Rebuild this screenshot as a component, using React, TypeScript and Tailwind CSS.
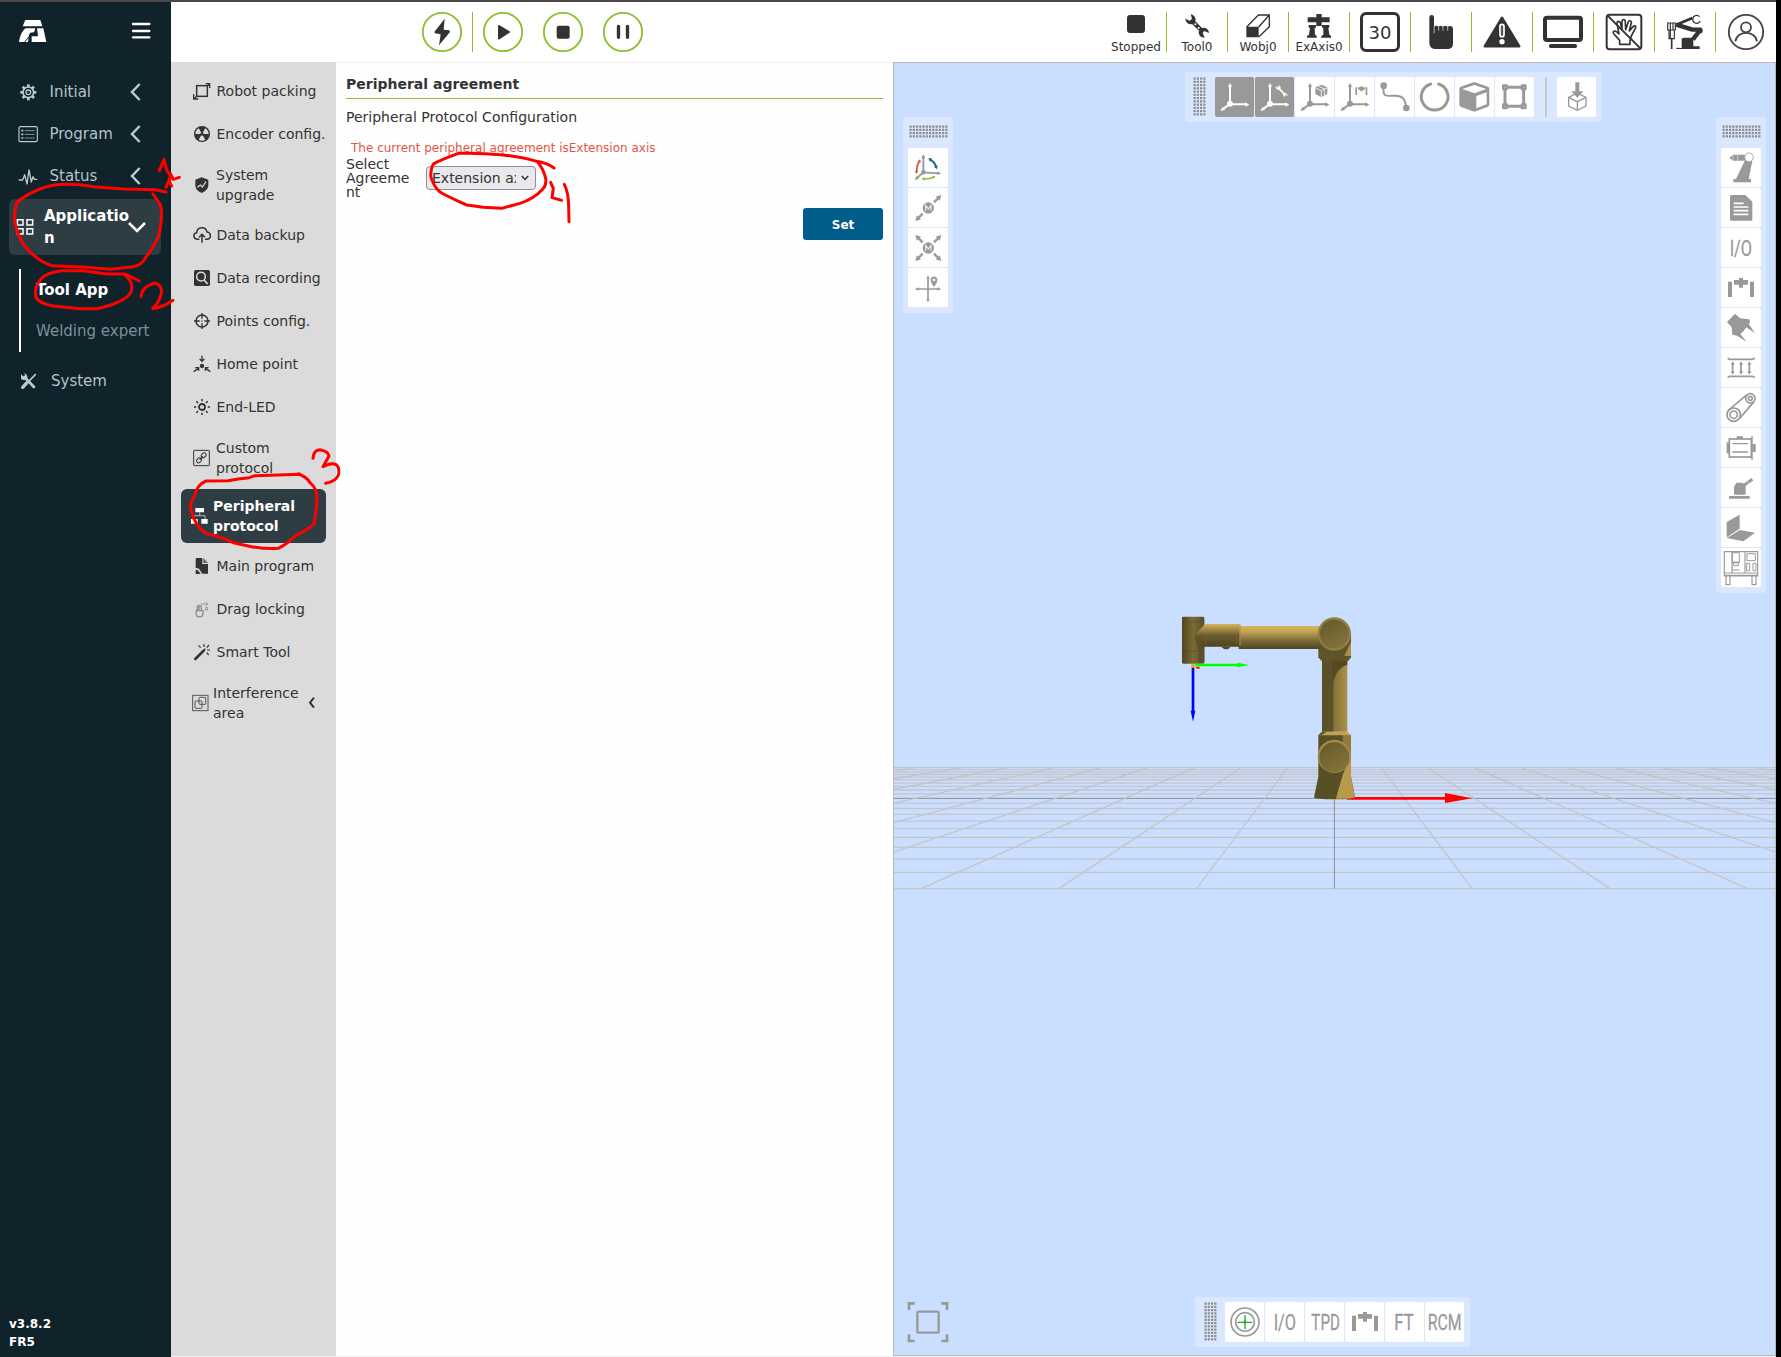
import React from "react";

type Kids = { children?: React.ReactNode };

/* Square icon drawn on a three-units-per-pixel grid. */
function Ico({ s = 40, children, className = "" }: Kids & { s?: number; className?: string }) {
  return (
    <svg width={s} height={s} viewBox={`0 0 ${s * 3} ${s * 3}`} className={`shrink-0 overflow-visible ${className}`} fill="none" stroke="none">
      {children}
    </svg>
  );
}

const DK = "#333333";
const GR = "#999999";

/* ---------- left navigation ---------- */

function NavChevron() {
  return (
    <Ico s={18} className="absolute left-[127px] top-[12px]">
      <path d="M38 3 L15 27 L38 51" stroke="#b9cad0" strokeWidth="7.5" />
    </Ico>
  );
}

function NavRow({ icon, label, chevron = true }: { icon: React.ReactNode; label: string; chevron?: boolean }) {
  return (
    <div className="relative flex h-[42px] items-center pl-[18px] text-[15px] text-[#b3c3c9]">
      <span className="flex w-[31.5px] items-center">{icon}</span>
      <span>{label}</span>
      {chevron && <NavChevron />}
    </div>
  );
}

const LT = "#b9cad0";
const gearTeeth = [0, 45, 90, 135, 180, 225, 270, 315];

function Sidebar() {
  return (
    <aside className="flex w-[171px] shrink-0 flex-col bg-[#10222a]">
      <div className="flex h-[69px] items-start pl-[18px] pt-[17px]">
        <svg width="30" height="24" viewBox="0 0 90 72" fill="#ffffff">
          <path d="M22 3 H67 L73 22 H14 Z" />
          <path d="M23 28 H52 L48 41 H36 L33 49 L30 69 H3 C6 52 11 36 23 28 Z" />
          <path d="M57 28 H76 L85 69 H41 V52 H60 Z" />
          <path d="M56 25 L53 42 H41 L34 52 L20 69" fill="none" stroke="#10222a" strokeWidth="3" />
        </svg>
        <svg width="20" height="18" viewBox="0 0 60 54" className="ml-[83px] mt-[3px]">
          <path d="M6 6 H55 M6 27 H55 M6 46 H55" stroke="#fff" strokeWidth="7" strokeLinecap="round" />
        </svg>
      </div>
      <NavRow
        label="Initial"
        icon={
          <Ico s={20}>
            <circle cx="31" cy="31" r="16" stroke={LT} strokeWidth="5" />
            <circle cx="31" cy="31" r="7" stroke={LT} strokeWidth="4" />
            {gearTeeth.map((a) => (
              <rect key={a} x="27" y="7" width="8" height="8" fill={LT} transform={`rotate(${a} 31 31)`} />
            ))}
          </Ico>
        }
      />
      <NavRow
        label="Program"
        icon={
          <Ico s={20}>
            <rect x="3" y="8" width="55" height="45" rx="4" stroke={LT} strokeWidth="3.500" />
            <path d="M10 20 H16 M10 31 H16 M10 42 H16" stroke={LT} strokeWidth="5" />
            <path d="M20 20 H50 M20 31 H50 M20 42 H50" stroke="#8fb0bd" strokeWidth="2.500" />
          </Ico>
        }
      />
      <NavRow
        label="Status"
        icon={
          <Ico s={20}>
            <path d="M2 42 H14 L20 26 L27 54 L33 12 L40 48 L45 32 L49 40 H58" stroke={LT} strokeWidth="4" strokeLinejoin="round" />
          </Ico>
        }
      />
      <div className="ml-[9px] mt-[2px] flex h-14 w-[152px] items-center rounded-md bg-[#2e3d43] text-[15px] font-bold leading-[22px] text-white">
        <Ico s={18} className="ml-[7px]">
          <path d="M4 5 H21 V21 H4 Z M33 5 H50 V21 H33 Z M4 32 H21 V48 H4 Z M33 32 H50 V48 H33 Z" stroke="#fff" strokeWidth="4.500" />
        </Ico>
        <span className="ml-[10px] w-[86px] break-all">Application</span>
        <Ico s={18} className="-ml-[2px]">
          <path d="M3 15 L27 39 L51 15" stroke="#fff" strokeWidth="7.500" />
        </Ico>
      </div>
      <div className="ml-[19px] mt-[14px] flex h-[83px] flex-col border-l-2 border-white pl-[15px] text-[15px]">
        <div className="flex h-[42px] items-center whitespace-nowrap font-bold text-white">Tool App</div>
        <div className="flex h-[41px] items-center whitespace-nowrap text-[#7a919b]">Welding expert</div>
      </div>
      <div className="mt-2 pl-[1.5px]">
        <NavRow
          label="System"
          chevron={false}
          icon={
            <Ico s={18}>
              <path d="M13 15 L42 45" stroke={LT} strokeWidth="8" strokeLinecap="round" />
              <path d="M3 7 L11 14 L16 10 L12 3 A13 13 0 0 1 22 19 A13 13 0 0 1 3 20 Z" fill={LT} />
              <path d="M46 8 L24 30" stroke={LT} strokeWidth="5" strokeLinecap="round" />
              <path d="M20 33 L8 46" stroke={LT} strokeWidth="10" strokeLinecap="round" />
            </Ico>
          }
        />
      </div>
      <div className="mt-auto pb-1.5 pl-[9px] text-[12px] font-bold leading-[18px] text-white">
        <div>v3.8.2</div>
        <div>FR5</div>
      </div>
    </aside>
  );
}

/* ---------- header ---------- */

function RoundButton({ children, className = "" }: Kids & { className?: string }) {
  return (
    <button className={`block h-10 w-10 ${className}`}>
      <Ico>
        <circle cx="60" cy="60" r="57.5" stroke="#8cbf2f" strokeWidth="5.500" />
        {children}
      </Ico>
    </button>
  );
}

function HeadCell({ icon, label, last }: { icon: React.ReactNode; label?: string; last?: boolean }) {
  return (
    <div className={last ? "relative flex h-10 w-[60px] flex-col items-center" : "relative flex h-10 w-[61px] flex-col items-center border-r border-[#8cbf2f]"}>
      {icon}
      {label && <div className="mt-px whitespace-nowrap text-[12px] leading-4 text-[#333]">{label}</div>}
    </div>
  );
}

function Header() {
  return (
    <header className="flex h-[60px] shrink-0 items-center bg-white">
      <div className="ml-[251px] flex">
        <RoundButton>
          <path d="M68 20 L37 60 L39 64 L56 67 L51 100 L84 60 L82 55 L65 53 Z" fill={DK} />
        </RoundButton>
        <div className="ml-[10px] w-px bg-[#8cbf2f]" />
        <RoundButton className="ml-[10px]">
          <path d="M48 42 L78 60 L48 79 Z" fill={DK} stroke={DK} strokeWidth="6" strokeLinejoin="round" />
        </RoundButton>
        <RoundButton className="ml-5">
          <rect x="41" y="41" width="39" height="39" rx="6" fill={DK} />
        </RoundButton>
        <RoundButton className="ml-5">
          <path d="M46.500 43 V76 M73.500 43 V76" stroke={DK} strokeWidth="10" strokeLinecap="round" />
        </RoundButton>
      </div>
      <div className="ml-auto flex">
        <HeadCell
          label="Stopped"
          icon={
            <Ico s={24} className="mt-0.5">
              <rect x="9" y="3" width="54" height="54" rx="9" fill={DK} />
            </Ico>
          }
        />
        <HeadCell
          label="Tool0"
          icon={
            <Ico s={24} className="mt-0.5">
              <path d="M17 1 A16 16 0 0 1 31 22 L51 42 A16 16 0 0 1 72 57 L58 51 L53 57 L59 71 A16 16 0 0 1 42 50 L21 30 A16 16 0 0 1 1 14 L14 20 L21 14 Z" fill={DK} />
              <circle cx="31" cy="31" r="3" fill="#fff" />
              <circle cx="41" cy="42" r="3" fill="#fff" />
            </Ico>
          }
        />
        <HeadCell
          label="Wobj0"
          icon={
            <Ico s={24} className="mt-0.5">
              <rect x="1" y="38" width="37" height="32" rx="2" fill={DK} />
              <path d="M2 39 L37 3 H70 V38 L38 69 M70 3 L38 39" stroke={DK} strokeWidth="4" strokeLinejoin="round" />
            </Ico>
          }
        />
        <HeadCell
          label="ExAxis0"
          icon={
            <Ico s={24} className="mt-0.5">
              <path d="M2 10 H68 V25 H44 V36 H28 V25 H2 Z M28 0 H44 V12 H28 Z" fill={DK} />
              <path d="M5 33 H27 V41 H23 L24 62 L29 65 V71 H0 V66 L6 62 L9 41 H5 Z M45 33 H67 V41 H64 L67 62 L72 65 V71 H43 V66 L49 62 V41 H45 Z" fill={DK} />
            </Ico>
          }
        />
        <HeadCell
          icon={<div className="flex h-10 w-10 items-center justify-center rounded-md border-[3px] border-[#333] text-[18px] text-[#333]">30</div>}
        />
        <HeadCell
          icon={
            <Ico>
              <path d="M25 16 Q25 9 32 9 Q39 9 39 16 V45 Q46 38 52 44 Q58 38 65 44 Q72 38 79 44 Q96 37 96 52 V94 Q96 111 82 111 H40 Q25 108 25 92 Z" fill={DK} />
              <path d="M39.500 44 V64 M53 42 V56 M66 42 V56 M80 42 V56" stroke="#c8c8c8" strokeWidth="2.500" />
            </Ico>
          }
        />
        <HeadCell
          icon={
            <Ico>
              <path d="M60 17 L112 103 H8 Z" fill={DK} stroke={DK} strokeWidth="7" strokeLinejoin="round" />
              <rect x="54" y="37" width="12" height="37" rx="6" fill="#555" stroke="#fff" strokeWidth="5" />
              <circle cx="60" cy="89" r="8" fill="#fff" />
            </Ico>
          }
        />
        <HeadCell
          icon={
            <Ico>
              <rect x="6" y="17" width="108" height="67" rx="6" stroke={DK} strokeWidth="12" />
              <rect x="18" y="96" width="84" height="12" rx="5" fill={DK} />
            </Ico>
          }
        />
        <HeadCell
          icon={
            <Ico>
              <rect x="8" y="8" width="104" height="104" rx="9" stroke={DK} strokeWidth="6" />
              <path
                d="M47 97 V85 L30 66 Q25 59 31 57 Q36 56 45 66 L39 34 Q39 28 44 28 Q49 29 50 36 L54 53 L54 27 Q56 21 61 23 Q65 25 64 31 L65 53 L73 29 Q77 24 81 28 Q84 31 81 36 L76 57 L88 43 Q93 40 95 44 Q96 49 92 53 L82 72 L78 86 V97 Z"
                stroke={DK}
                strokeWidth="5"
                strokeLinejoin="round"
              />
              <path d="M10 10 L110 110" stroke={DK} strokeWidth="6" />
            </Ico>
          }
        />
        <HeadCell
          icon={
            <Ico>
              <path d="M50 108 V82 Q50 77 56 77 H79 Q85 77 85 83 V103 H104 V111 H34 V107 Z" fill={DK} />
              <path d="M34 38 L82 53 L106 53 L84 82" stroke={DK} strokeWidth="13" strokeLinejoin="round" />
              <path d="M34 38 L82 18" stroke={DK} strokeWidth="8" />
              <path d="M104 14 A12 12 0 1 0 106 27" stroke={DK} strokeWidth="4" />
              <circle cx="105" cy="56" r="8" fill={DK} />
              <path d="M8 33 H31 V54 H8 Z M12 54 H28 V80 H12 Z M16 33 V80 M24 33 V54" stroke={DK} strokeWidth="3.500" />
              <path d="M20 80 V111" stroke={DK} strokeWidth="5" />
            </Ico>
          }
        />
        <HeadCell
          last
          icon={
            <Ico>
              <circle cx="60" cy="60" r="51.500" stroke="#444" strokeWidth="5.500" />
              <circle cx="60" cy="46" r="15" stroke="#444" strokeWidth="5.500" />
              <path d="M28 88 C33 54 88 54 93 88" stroke="#444" strokeWidth="5.500" />
            </Ico>
          }
        />
      </div>
    </header>
  );
}

/* ---------- second-level menu ---------- */

type Sub = { label: string; tall?: boolean; pad: string; active?: boolean; chevron?: boolean; icon: React.ReactNode };

const rays = [0, 45, 90, 135, 180, 225, 270, 315];

const subItems: Sub[] = [
  {
    label: "Robot packing",
    pad: "pl-3 gap-[5.5px]",
    icon: (
      <>
        <rect x="11" y="11" width="32" height="32" stroke={DK} strokeWidth="4.500" />
        <path d="M38 5 H50 V18 M2 37 V51 H16 M44 11 L50 5 M3 50 L10 44" stroke={DK} strokeWidth="4" />
      </>
    ),
  },
  {
    label: "Encoder config.",
    pad: "pl-3 gap-[5.5px]",
    icon: (
      <>
        <circle cx="27" cy="27" r="24" fill={DK} />
        <path d="M27 27 L17 10 A20 20 0 0 1 37 10 Z" fill="#dbdbdb" transform="rotate(60 27 27)" />
        <path d="M27 27 L17 10 A20 20 0 0 1 37 10 Z" fill="#dbdbdb" transform="rotate(180 27 27)" />
        <path d="M27 27 L17 10 A20 20 0 0 1 37 10 Z" fill="#dbdbdb" transform="rotate(300 27 27)" />
        <circle cx="27" cy="27" r="5" fill={DK} />
      </>
    ),
  },
  {
    label: "System upgrade",
    tall: true,
    pad: "pl-3 gap-[5px]",
    icon: (
      <>
        <path d="M26 4 L46 11 V28 Q45 43 26 51 Q7 43 7 28 V11 Z" fill={DK} />
        <path d="M13 34 L22 27 L28 33 L39 17" stroke="#dbdbdb" strokeWidth="3.500" />
      </>
    ),
  },
  {
    label: "Data backup",
    pad: "pl-3 gap-[5.5px]",
    icon: (
      <>
        <path d="M19 40 H13 C-1 38 0 22 11 20 C13 2 38 0 42 18 C56 20 55 39 42 40 H36" stroke={DK} strokeWidth="4.500" />
        <path d="M27 50 V26 M18 34 L27 25 L36 34" stroke={DK} strokeWidth="4.500" />
      </>
    ),
  },
  {
    label: "Data recording",
    pad: "pl-3 gap-[5.5px]",
    icon: (
      <>
        <rect x="3" y="3" width="48" height="48" rx="5" fill={DK} />
        <circle cx="24" cy="23" r="13" stroke="#dbdbdb" strokeWidth="4.500" />
        <path d="M33 33 L44 45" stroke="#dbdbdb" strokeWidth="5" />
      </>
    ),
  },
  {
    label: "Points config.",
    pad: "pl-3 gap-[5.5px]",
    icon: (
      <>
        <circle cx="27" cy="27" r="18" stroke={DK} strokeWidth="4.500" />
        <path d="M27 3 V20 M27 34 V51 M3 27 H20 M34 27 H51" stroke={DK} strokeWidth="4" />
        <circle cx="27" cy="27" r="2" fill={DK} />
      </>
    ),
  },
  {
    label: "Home point",
    pad: "pl-3 gap-[5.5px]",
    icon: (
      <>
        <circle cx="27" cy="33" r="6.500" fill={DK} />
        <path d="M27 2 V17 M20 12 L27 19 L34 12 M2 50 L15 41 M7 38 H17 V47 M52 50 L39 41 M47 38 H37 V47" stroke={DK} strokeWidth="4" />
      </>
    ),
  },
  {
    label: "End-LED",
    pad: "pl-3 gap-[5.5px]",
    icon: (
      <>
        <circle cx="27" cy="27" r="9" stroke={DK} strokeWidth="5.500" />
        {rays.map((a) => (
          <path key={a} d="M27 3 V10" stroke={DK} strokeWidth="4.500" transform={`rotate(${a} 27 27)`} />
        ))}
      </>
    ),
  },
  {
    label: "Custom protocol",
    tall: true,
    pad: "pl-3 gap-[5px]",
    icon: (
      <>
        <rect x="2" y="4" width="47" height="46" rx="2" stroke={DK} strokeWidth="3" />
        <rect x="24" y="13" width="16" height="12" rx="6" stroke={DK} strokeWidth="3" transform="rotate(-45 32 19)" />
        <rect x="10" y="28" width="16" height="12" rx="6" stroke={DK} strokeWidth="3" transform="rotate(-45 18 34)" />
        <path d="M20 32 L30 22" stroke={DK} strokeWidth="3.500" />
      </>
    ),
  },
  {
    label: "Peripheral protocol",
    tall: true,
    active: true,
    pad: "pl-[10px] gap-1",
    icon: (
      <>
        <path d="M13 3 H39 V16 H13 Z M0 36 H20 V50 H0 Z M31 36 H50 V50 H31 Z" fill="#fff" />
        <path d="M26 16 V26 M10 37 V26 H42 V37" stroke="#c5d0d3" strokeWidth="2.500" />
      </>
    ),
  },
  {
    label: "Main program",
    pad: "pl-3 gap-[5.5px]",
    icon: (
      <>
        <path d="M8 6 Q8 3 12 3 H28 V21 H45 V50 H28 L18 35 L8 32 Z" fill={DK} />
        <path d="M31 3 L45 18 H31 Z" fill="#666" />
        <path d="M8 38 L15 40 L23 51 H8 Z" fill={DK} />
      </>
    ),
  },
  {
    label: "Drag locking",
    pad: "pl-3 gap-[5.5px]",
    icon: (
      <>
        <path d="M10 32 H30 V44 L26 50 H13 L9 42 Z M13 32 V20 Q14 16 18 18 V30 M18 18 Q23 14 25 21 V31" stroke="#8c8c8c" strokeWidth="4" />
        <path d="M24 12 H43 M38 7 L44 12 L38 17 M38 22 H44 V30 H38 Z" stroke="#888" strokeWidth="2.500" />
      </>
    ),
  },
  {
    label: "Smart Tool",
    pad: "pl-3 gap-[5.5px]",
    icon: (
      <>
        <path d="M7 48 L32 23" stroke={DK} strokeWidth="8" strokeLinecap="round" />
        <path d="M30 25 L37 17" stroke={DK} strokeWidth="4" />
        <path d="M33 3 V12 M17 7 L23 14 M48 6 L41 14 M42 21 H51 M41 29 L47 36" stroke={DK} strokeWidth="3.500" />
      </>
    ),
  },
  {
    label: "Interference area",
    tall: true,
    chevron: true,
    pad: "pl-[9.500px] gap-[4.500px]",
    icon: (
      <>
        <rect x="5" y="4" width="46" height="46" stroke="#555" strokeWidth="3" />
        <rect x="24" y="10" width="20" height="21" rx="2" stroke="#555" strokeWidth="3" />
        <rect x="12" y="21" width="21" height="22" rx="2" stroke="#555" strokeWidth="3" />
      </>
    ),
  },
];

function SubMenu() {
  return (
    <nav className="flex w-[165px] shrink-0 flex-col gap-1 bg-[#dbdbdb] pl-[10px] pt-[9.5px] text-[14px] leading-5 text-[#333]">
      {subItems.map((it) => (
        <div
          key={it.label}
          className={`flex w-[145px] items-center ${it.pad} ${it.tall ? "h-[54px]" : "h-[39px]"} ${it.active ? "rounded-md bg-[#2e3d43] font-bold text-white" : ""}`}
        >
          <Ico s={18}>{it.icon}</Ico>
          <span className={it.tall ? "w-[86px]" : "whitespace-nowrap"}>{it.label}</span>
          {it.chevron && (
            <Ico s={12} className="ml-0.5">
              <path d="M24 2 L12 17 L24 32" stroke={DK} strokeWidth="6" />
            </Ico>
          )}
        </div>
      ))}
    </nav>
  );
}

/* ---------- settings panel ---------- */

function Panel() {
  return (
    <section className="w-[557px] shrink-0 border-t border-[#f0f0f0] bg-[#fefefe] pl-[10px] pr-[10px] text-[14px] text-[#333]">
      <h2 className="flex h-9 items-center border-b border-[#8cbf2f] pt-2 font-bold">Peripheral agreement</h2>
      <div className="mt-2 flex h-5 items-center">Peripheral Protocol Configuration</div>
      <div className="mt-[13px] flex h-4 items-center whitespace-nowrap pl-[5px] text-[12px] text-[#e25643]">The current peripheral agreement isExtension axis</div>
      <div className="mt-px flex items-center">
        <label className="w-16 break-words leading-[14px]">Select Agreement</label>
        <select className="ml-4 h-6 w-[110px] appearance-none rounded border border-[#8f8f9d] bg-[#e9e9ed] pl-[5px] pr-[19px] text-[14px] leading-[21px]">
          <option>Extension axis</option>
        </select>
        <svg width="8" height="6" viewBox="0 0 8 6" className="relative -ml-[15px]" fill="none">
          <path d="M0.800 1 L4 4.500 L7.200 1" stroke="#333" strokeWidth="1.500" />
        </svg>
      </div>
      <div className="mt-[9px] flex justify-end">
        <button className="h-8 w-20 rounded-[3px] bg-[#005c8a] pt-0.5 text-[12px] font-bold text-white">Set</button>
      </div>
    </section>
  );
}

/* ---------- 3D view ---------- */

const rowsY = Array.from({ length: 21 }, (_, i) => 600 + (316.4 + 5650 / (10.28 + i)) / 3);
const cols = Array.from({ length: 21 }, (_, i) => i - 10);

function Scene() {
  return (
    <svg className="absolute left-0 top-0" width="881" height="1292" viewBox="894 63 881 1292" fill="none">
      <defs>
        <linearGradient id="armH" x1="0" y1="0" x2="0" y2="1">
          <stop offset="0" stopColor="#d6b45c" />
          <stop offset="0.250" stopColor="#c3a452" />
          <stop offset="0.650" stopColor="#776834" />
          <stop offset="1" stopColor="#4d4422" />
        </linearGradient>
        <linearGradient id="armJ" x1="0" y1="0" x2="0" y2="1">
          <stop offset="0" stopColor="#d6b45c" />
          <stop offset="0.220" stopColor="#a88e46" />
          <stop offset="0.500" stopColor="#6a5c2e" />
          <stop offset="1" stopColor="#4d4422" />
        </linearGradient>
        <linearGradient id="armV" x1="0" y1="0" x2="1" y2="0">
          <stop offset="0" stopColor="#5a4f27" />
          <stop offset="0.420" stopColor="#5c5128" />
          <stop offset="0.480" stopColor="#857338" />
          <stop offset="1" stopColor="#ad9149" />
        </linearGradient>
        <linearGradient id="wrist" x1="0" y1="0" x2="1" y2="0">
          <stop offset="0" stopColor="#50461f" />
          <stop offset="0.500" stopColor="#7a6a35" />
          <stop offset="1" stopColor="#5a4f27" />
        </linearGradient>
        <linearGradient id="cap" x1="0.800" y1="1" x2="0.200" y2="0">
          <stop offset="0" stopColor="#85743b" />
          <stop offset="1" stopColor="#675a2d" />
        </linearGradient>
      </defs>
      {rowsY.map((y, i) => (
        <path key={i} d={`M894 ${y} H1775`} stroke={i === 10 ? "#8c8c8c" : "#c3c5cd"} strokeWidth={i === 10 ? 1 : 1.3} />
      ))}
      {cols.map((j) => (
        <path key={j} d={`M${1334.4 + j * 137.8} 888.600 L${1334.4 + j * 46.7} 767.700`} stroke={j === 0 ? "#8c8c8c" : "#c5c3c3"} strokeWidth={j === 0 ? 1 : 1.3} />
      ))}
      <g transform="translate(1160 600) scale(0.333333)">
        <path d="M560 595 H860" stroke="#ff0000" strokeWidth="8" />
        <path d="M855 579 L937 595 L855 609 Z" fill="#ff0000" />
        <path d="M475 405 H573 V530 L585 590 Q583 597 523 598 Q465 598 462 592 L475 530 Z" fill="#575027" />
        <path d="M573 465 V530 L585 592 Q570 598 528 596 L535 570 L548 525 Z" fill="#b89a4c" />
        <path d="M573 405 H548 V435 L573 470 Z" fill="#91793b" />
        <path d="M486 395 H562 L573 406 H475 Z" fill="#c2a251" />
        <path d="M475 406 L486 395 H500 L484 406 Z" fill="#5e5329" />
        <rect x="486" y="175" width="76" height="220" fill="url(#armV)" />
        <path d="M562 175 V194 C535 202 525 225 517 255 V175 Z" fill="#554a24" />
        <path d="M475 100 H573 V172 L566 182 H484 L475 172 Z" fill="#5e5329" />
        <path d="M573 125 V168 H553 Z" fill="#aa8f47" />
        <rect x="236" y="78" width="243" height="69" fill="url(#armH)" />
        <path d="M183 140 H212 Q200 156 183 140 Z" fill="#50461f" />
        <rect x="66" y="50" width="67" height="141" rx="4" fill="url(#wrist)" />
        <path d="M66 66 H133 M66 154 H116" stroke="#50461f" strokeWidth="1.500" />
        <path d="M103 106 L136 72 H242 V140 H133 L120 128 Z" fill="url(#armJ)" />
        <path d="M104 108 L133 139 V187 H116 V150 Z" fill="#5a4f27" />
        <path d="M240 78 V137" stroke="#c3a452" strokeWidth="4" opacity="0.700" />
        <path d="M138 82 V135 M230 84 V132" stroke="#8f7a3c" strokeWidth="2" opacity="0.600" />
        <circle cx="523" cy="102" r="50" fill="#927d3f" />
        <circle cx="523" cy="102" r="43" fill="url(#cap)" />
        <circle cx="523" cy="469" r="50" fill="#a48a44" />
        <circle cx="523" cy="472" r="45" fill="url(#cap)" />
        <path d="M106 195 H236" stroke="#00ff00" strokeWidth="8" />
        <path d="M232 188 L268 195 L232 202 Z" fill="#00ff00" />
        <path d="M99 202 V335" stroke="#0000ff" strokeWidth="8" />
        <path d="M92 332 L99 365 L106 332 Z" fill="#0000ff" />
        <circle cx="99" cy="197" r="6" fill="#ffa500" />
        <path d="M106 200 H119 V206 H110 Z" fill="#ee2211" />
        <path d="M517 598 H530 L523 604 Z" fill="#ffa500" />
      </g>
    </svg>
  );
}

function Grip({ cols: c, rows: r }: { cols: number; rows: number }) {
  return (
    <svg width={c * 3.25} height={r * 3.25} viewBox={`0 0 ${c * 3.25} ${r * 3.25}`} fill="#8c8c8c">
      {Array.from({ length: c * r }, (_, i) => (
        <rect key={i} x={(i % c) * 3.25 + 0.5} y={Math.floor(i / c) * 3.25 + 0.5} width="2.2" height="2.2" />
      ))}
    </svg>
  );
}

function Tile({ children, dark, tall }: Kids & { dark?: boolean; tall?: boolean }) {
  return (
    <button className={`flex shrink-0 rounded-[2px] ${tall ? "h-[39px] w-10" : "h-10 w-[39px]"} ${dark ? "bg-[#999]" : "bg-white"}`}>
      <Ico>{children}</Ico>
    </button>
  );
}

function Axes({ c = GR }: { c?: string }) {
  return (
    <>
      <path d="M45 81 V28 M45 81 L96 82 M45 81 L22 97" stroke={c} strokeWidth="6" />
      <circle cx="45" cy="80" r="9" fill={c} />
      <path d="M45 17 L51 30 H39 Z M103 83 L91 76 V89 Z M16 102 L22 90 L30 99 Z" fill={c} />
    </>
  );
}

function Gantry() {
  return <path d="M21 41 H33 V87 H21 Z M87 41 H99 V87 H87 Z M39 36 H54 V30 H66 V36 H81 V50 H66 V59 H54 V50 H39 Z" fill={GR} />;
}

/* Narrow lettering: the glyphs are squeezed sideways to the tile's width. */
function Word({ t, x, k }: { t: string; x: number; k: number }) {
  return (
    <text transform={`translate(${x} 84) scale(${k} 1)`} fontFamily="Roboto, sans-serif" fontSize="68" fill={GR} stroke={GR} strokeWidth="0.8">
      {t}
    </text>
  );
}

function MBall() {
  return (
    <>
      <circle cx="61" cy="60" r="17" fill={GR} />
      <path d="M53 69 V52 L61 63 L69 52 V69" stroke="#e8e8e8" strokeWidth="3.500" />
    </>
  );
}

function MArrow({ a }: { a: number }) {
  return (
    <g transform={`rotate(${a} 61 60)`}>
      <path d="M61 36 V16" stroke={GR} strokeWidth="7" />
      <path d="M61 5 L70 20 H52 Z" fill={GR} />
    </g>
  );
}

function Viewport() {
  return (
    <section className="relative w-[883px] shrink-0 border border-[#b9b9b9] bg-[#cadfff]">
      <Scene />

      <div className="absolute left-[291px] top-[9px] flex h-[50px] w-[417px] rounded-[3px] bg-[#dae8ff] py-[5px] pl-2">
        <Grip cols={4} rows={12} />
        <div className="ml-[9px] flex gap-px">
          <Tile dark>
            <Axes c="#fff" />
          </Tile>
          <Tile dark>
            <Axes c="#fff" />
            <path d="M71 34 L90 53" stroke="#fff" strokeWidth="5" />
            <path d="M62 27 L69 32 L71 25 A10 10 0 0 1 76 38 A10 10 0 0 1 62 27 Z M98 57 L91 53 L90 60 A9 9 0 0 1 85 48 A10 10 0 0 1 98 57 Z" fill="#fff" />
          </Tile>
          <Tile>
            <Axes />
            <path d="M79 23 L97 31 V51 L79 61 L61 51 V31 Z" fill={GR} />
            <path d="M61 32 L79 41 L97 32 M79 41 V61 M70 27 L88 36 V56" stroke="#fff" strokeWidth="2.500" />
          </Tile>
          <Tile>
            <Axes />
            <path d="M61 31 H66 V54 H61 Z M92 31 H97 V54 H92 Z M69 31 H76 V28 H83 V31 H90 V38 H83 V43 H76 V38 H69 Z" fill={GR} />
          </Tile>
          <Tile>
            <path d="M26 26 C22 62 32 57 58 56 C85 55 91 68 94 93" stroke={GR} strokeWidth="6" />
            <circle cx="26" cy="26" r="10" fill={GR} />
            <circle cx="94" cy="93" r="10" fill={GR} />
          </Tile>
          <Tile>
            <path d="M47 21 A40 40 0 1 0 71 21" stroke={GR} strokeWidth="9" strokeLinecap="round" />
          </Tile>
          <Tile>
            <path d="M58 15 L99 29 Q103 31 103 36 V82 Q103 87 99 89 L58 104 L17 89 Q13 87 13 82 V36 Q13 31 17 29 Z" fill={GR} />
            <path d="M22 36 L58 24 L94 36 L58 49 Z M64 57 L95 46 V82 L64 94 Z" fill="#fff" />
          </Tile>
          <Tile>
            <path d="M30 31 H86 V88 H30 Z" stroke={GR} strokeWidth="9" />
            <path d="M25 26 H35 V36 H25 Z M81 26 H91 V36 H81 Z M25 83 H35 V93 H25 Z M81 83 H91 V93 H81 Z" fill="#fff" stroke={GR} strokeWidth="8" strokeLinejoin="round" />
          </Tile>
        </div>
        <div className="ml-[11px] h-10 w-[2px] bg-[#c8c8c8]" />
        <div className="ml-[10px]">
          <Tile>
            <path d="M61 48 L87 61 V87 L61 100 L35 87 V61 Z M35 61 L61 74 L87 61 M61 74 V100" stroke={GR} strokeWidth="4" />
            <path d="M55 16 H67 V43 H79 L61 62 L43 43 H55 Z" fill={GR} />
          </Tile>
        </div>
      </div>

      <div className="absolute left-[9px] top-[54px] flex h-[196px] w-[50px] flex-col items-center rounded-[3px] bg-[#dae8ff] pt-2">
        <Grip cols={12} rows={4} />
        <div className="mt-[10px] flex flex-col gap-px">
          <Tile tall>
            <path d="M46 73 V26 M46 73 L92 76 M46 73 L27 90" stroke={GR} strokeWidth="5.500" />
            <circle cx="46" cy="73" r="7" fill={GR} />
            <path d="M46 19 L52 31 H40 Z M99 76 L88 70 V82 Z M20 96 L25 84 L33 92 Z" fill={GR} />
            <path d="M26 72 Q26 52 34 40" stroke="#d9473a" strokeWidth="5" />
            <path d="M36 34 L39 43 L29 41 Z M25 78 L21 69 L30 68 Z" fill="#d9473a" />
            <path d="M65 34 Q80 41 84 56" stroke="#1b6391" strokeWidth="6" />
            <path d="M61 30 L73 32 L66 41 Z M87 64 L78 56 L89 52 Z" fill="#1b6391" />
            <path d="M46 93 Q65 94 77 87" stroke="#8cbf2f" strokeWidth="5" />
            <path d="M41 92 L49 87 V98 Z M82 84 L73 83 L78 92 Z" fill="#8cbf2f" />
          </Tile>
          <Tile tall>
            <MArrow a={45} />
            <MArrow a={225} />
            <MBall />
          </Tile>
          <Tile tall>
            <MArrow a={45} />
            <MArrow a={135} />
            <MArrow a={225} />
            <MArrow a={315} />
            <MBall />
          </Tile>
          <Tile tall>
            <path d="M60 28 V98 M26 63 H94" stroke={GR} strokeWidth="5" />
            <path d="M60 22 L65 32 H55 Z M60 103 L65 93 H55 Z M21 63 L31 58 V68 Z M99 63 L89 58 V68 Z" fill={GR} />
            <path d="M78 57 C67 42 67 36 69 31 A10 10 0 0 1 87 31 C89 36 89 42 78 57 Z" fill={GR} />
            <circle cx="78" cy="36" r="4" fill="#fff" />
          </Tile>
        </div>
      </div>

      <div className="absolute left-[822px] top-[54px] flex h-[476px] w-[50px] flex-col items-center rounded-[3px] bg-[#dae8ff] pt-2">
        <Grip cols={12} rows={4} />
        <div className="mt-[10px] flex flex-col gap-px">
          <Tile tall>
            <path d="M25 29 L36 20 H72 V38 H36 Z" fill={GR} />
            <path d="M36 20 V38 M50 20 V38" stroke="#fff" strokeWidth="1.500" />
            <path d="M72 37 L94 39 L83 93 H90 V103 H37 V93 H45 Z" fill={GR} />
            <circle cx="84" cy="28" r="13" fill="#fff" stroke={GR} strokeWidth="2.500" />
          </Tile>
          <Tile tall>
            <path d="M32 21 H73 L94 41 V98 H32 Q27 98 27 93 V26 Q27 21 32 21 Z" fill={GR} />
            <path d="M38 46 H68 M38 57 H82 M38 68 H82 M38 79 H82" stroke="#fff" strokeWidth="5" />
          </Tile>
          <Tile tall>
            <Word t="I/O" x={26} k={0.72} />
          </Tile>
          <Tile tall>
            <Gantry />
          </Tile>
          <Tile tall>
            <path d="M42 17 L57 31 L84 34 L88 42 L83 47 L102 76 L76 58 L67 70 L58 78 L77 102 L49 83 L34 80 L32 58 L18 42 Z" fill={GR} />
          </Tile>
          <Tile tall>
            <path d="M20 30 L25 34 H95 L101 30 M20 89 L25 85 H95 L101 89" stroke={GR} strokeWidth="5" />
            <path d="M35 46 V75 M60 46 V75 M85 46 V75" stroke={GR} strokeWidth="5" />
            <path d="M35 40 L41 50 H29 Z M60 40 L66 50 H54 Z M85 40 L91 50 H79 Z M35 80 L41 70 H29 Z M60 80 L66 70 H54 Z M85 80 L91 70 H79 Z" fill={GR} />
          </Tile>
          <Tile tall>
            <circle cx="38" cy="80" r="20" stroke={GR} strokeWidth="5" />
            <circle cx="38" cy="80" r="11" stroke={GR} strokeWidth="5" />
            <circle cx="88" cy="31" r="14" stroke={GR} strokeWidth="5" />
            <circle cx="88" cy="31" r="6" stroke={GR} strokeWidth="5" />
            <path d="M22 67 L78 20 M56 91 L99 41" stroke={GR} strokeWidth="5" />
          </Tile>
          <Tile tall>
            <rect x="25" y="33" width="66" height="54" stroke={GR} strokeWidth="5" />
            <path d="M34 47 H81 M34 72 H81" stroke={GR} strokeWidth="4" />
            <path d="M17 43 H25 V76 H17 Z M47 25 H66 V33 H47 Z M94 48 H104 V72 H94 Z" fill={GR} />
            <path d="M93 24 V96" stroke={GR} strokeWidth="4" />
          </Tile>
          <Tile tall>
            <path d="M24 84 H86 V92 H24 Z M39 80 V56 L46 44 H65 L74 55 V80 Z" fill={GR} />
            <path d="M67 53 L94 34" stroke={GR} strokeWidth="9" />
            <path d="M80 40 L85 48" stroke="#fff" strokeWidth="1.500" />
          </Tile>
          <Tile tall>
            <path d="M17 42 L56 20 V62 L17 88 Z M17 90 L57 66 L102 74 L67 100 Z" fill={GR} />
          </Tile>
          <Tile tall>
            <path d="M10 11 H110 V75 H10 Z M33 11 V75 M72 11 V75 M37 42 H54 M10 82 H110 M10 75 V84 H110 V75 M15 84 V110 H27 V84 M93 84 V110 H105 V84" stroke={GR} strokeWidth="3.500" />
            <path d="M34 14 H55 V44 H34 Z M38 44 H52 V53 H38 Z M33 66 H55 M78 17 H103 V38 H78 Z M77 46 H86 V68 H77 Z M96 46 H105 V68 H96 Z" stroke={GR} strokeWidth="3" />
          </Tile>
        </div>
      </div>

      <Ico className="absolute left-[14px] top-[1239px]">
        <path d="M3 24 V4 H20 M100 4 H117 V24 M3 97 V117 H20 M100 117 H117 V97" stroke={GR} strokeWidth="8" />
        <rect x="28" y="29" width="64" height="63" rx="4" stroke={GR} strokeWidth="7" />
      </Ico>

      <div className="absolute left-[301px] top-[1234px] flex h-[50px] w-[275px] rounded-[3px] bg-[#dae8ff] py-[5px] pl-[9px]">
        <Grip cols={4} rows={12} />
        <div className="ml-2 flex gap-px">
          <Tile>
            <circle cx="60" cy="60" r="42" stroke={GR} strokeWidth="5" />
            <circle cx="60" cy="60" r="28" stroke={GR} strokeWidth="5" />
            <circle cx="60" cy="60" r="5" fill={GR} />
            <path d="M60 39 V82 M38 61 H82" stroke="#22aa22" strokeWidth="4" />
          </Tile>
          <Tile>
            <Word t="I/O" x={26} k={0.72} />
          </Tile>
          <Tile>
            <Word t="TPD" x={19} k={0.67} />
          </Tile>
          <Tile>
            <Gantry />
          </Tile>
          <Tile>
            <Word t="FT" x={28} k={0.74} />
          </Tile>
          <Tile>
            <Word t="RCM" x={8} k={0.7} />
          </Tile>
        </div>
      </div>
    </section>
  );
}

/* ---------- hand-drawn step marks ---------- */

function Ink() {
  return (
    <svg className="pointer-events-none absolute left-0 top-0" width="600" height="600" viewBox="0 0 1800 1800" fill="none" stroke="#ff0000" strokeWidth="9" strokeLinecap="round" strokeLinejoin="round">
      <path d="M498 576 L465 569 L370 567 L280 560 Q230 552 190 553 Q150 555 120 567 Q75 585 50 608 Q42 640 44 665 Q52 705 70 732 Q105 780 155 797 L250 801 L330 808 L400 800 Q425 795 435 775 Q470 730 478 700 Q490 640 480 612 L459 582" />
      <path d="M478 512 L492 478 L500 510 L512 528 L498 562 M515 558 L508 545 L512 522 L520 538 L538 532" />
      <path d="M418 843 L376 822 L320 822 L250 812 L185 812 Q140 818 125 835 Q102 860 107 890 Q115 910 160 918 L240 926 L290 926 Q330 918 350 908 Q390 892 395 870 Q400 845 374 824" />
      <path d="M423 890 Q425 860 465 849 Q485 855 485 875 Q480 905 458 926 Q490 922 519 901" />
      <g transform="translate(510 1140)">
        <path d="M390 283 L255 287 L238 293 L205 297 L175 302 L108 303 Q80 315 75 345 Q55 375 65 395 Q75 440 108 460 L160 475 L190 488 L245 500 Q290 508 325 505 Q355 490 375 468 Q420 445 432 432 Q440 390 441 350 Q440 325 420 308 Q410 290 385 282" />
        <path d="M429 235 Q430 210 450 209 Q475 214 477 228 L459 260 Q495 242 505 262 Q515 300 467 310" />
      </g>
      <g transform="translate(510 180)">
        <path d="M1152 324 Q1130 308 1100 304 Q1060 292 1000 285 Q930 278 865 280 Q810 300 790 312 Q780 330 783 352 Q795 390 820 402 Q855 420 890 435 Q930 440 940 442 L995 445 L1050 430 Q1090 418 1118 388 Q1130 375 1127 355 Q1120 325 1102 305" />
      </g>
      <path d="M1652 547 L1660 565 L1656 593 L1685 601 M1693 553 Q1706 580 1706 620 L1707 665" />
    </svg>
  );
}

export default function App() {
  return (
    <div className="relative flex h-[1357px] w-[1781px] overflow-hidden bg-black font-['DejaVu_Sans',sans-serif]">
      <div className="flex w-[1776px] flex-col">
        <div className="h-[2px] shrink-0 bg-[#4b494a]" />
        <div className="flex flex-1">
          <Sidebar />
          <div className="flex w-[1605px] flex-col bg-[#f0f0f0]">
            <Header />
            <main className="flex h-[1294px]">
              <SubMenu />
              <Panel />
              <Viewport />
            </main>
          </div>
        </div>
      </div>
      <Ink />
    </div>
  );
}
